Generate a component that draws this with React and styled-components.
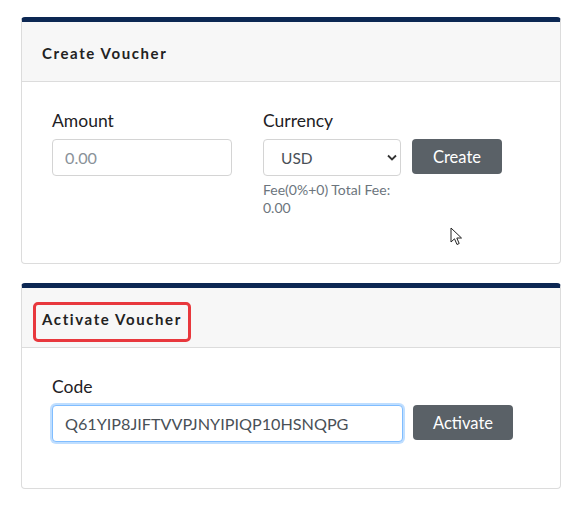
import React from "react";
import styled, { createGlobalStyle } from "styled-components";

const Global = createGlobalStyle`
  html, body { margin: 0; padding: 0; background: #fff; }
  body { font-family: Lato, "Open Sans", sans-serif; color: #212529; }
  * { box-sizing: border-box; }
`;

const Page = styled.div`
  position: relative;
  width: 588px;
  height: 508px;
  padding: 17px 27px 0 21px;
  display: flex;
  flex-direction: column;
  gap: 19px;
`;

const Card = styled.section`
  width: 540px;
  border: 1px solid #dcdcdc;
  border-top: 5px solid #0c2753;
  border-radius: 4px;
  background: #fff;
  height: ${(p) => p.$h}px;
  display: flex;
  flex-direction: column;
`;

const CardHeader = styled.div`
  height: 60px;
  background: #f7f7f7;
  border-bottom: 1px solid #dcdcdc;
  display: flex;
  align-items: center;
  padding: 2px 0 0 20px;
`;

const Title = styled.h2`
  position: relative;
  margin: 0;
  font-size: 15px;
  line-height: 18px;
  font-weight: 700;
  letter-spacing: 1.6px;
  color: #222;
  ${(p) =>
    p.$highlight &&
    `
    &::after {
      content: "";
      position: absolute;
      left: -9px;
      right: -9px;
      top: -8px;
      bottom: -14px;
      border: 3px solid #e8383d;
      border-radius: 5px;
    }
  `}
`;

const CardBody = styled.div`
  padding: 27px 30px 0 30px;
  display: flex;
  align-items: flex-start;
`;

const Field = styled.div`
  width: ${(p) => p.$w}px;
  margin-right: ${(p) => p.$mr || 0}px;
  display: flex;
  flex-direction: column;
`;

const Label = styled.label`
  font-size: 17.5px;
  line-height: 24px;
  margin-bottom: 6px;
  color: #1e2124;
`;

const Input = styled.input`
  width: 100%;
  height: 37px;
  padding: 0 12px;
  font-family: Lato, sans-serif;
  font-size: 16.2px;
  color: #495057;
  border: 1px solid ${(p) => (p.$focus ? "#80bdff" : "#d4d4d4")};
  border-radius: 4px;
  outline: none;
  box-shadow: ${(p) => (p.$focus ? "0 0 0 2px rgba(0,123,255,0.25)" : "none")};
  &::placeholder { color: #8a9299; }
`;

const SelectWrap = styled.div`
  position: relative;
  width: 100%;
  height: 37px;
`;

const Select = styled.select`
  width: 100%;
  height: 37px;
  appearance: none;
  -webkit-appearance: none;
  padding: 0 0 0 17px;
  font-family: Lato, sans-serif;
  font-size: 15.5px;
  color: #495057;
  background: #fff;
  border: 1px solid #d4d4d4;
  border-radius: 4px;
  outline: none;
`;

const Chevron = styled.svg`
  position: absolute;
  right: 4px;
  top: 15px;
  pointer-events: none;
`;

const Help = styled.div`
  margin-top: 5px;
  font-size: 14px;
  line-height: 18px;
  color: #6c757d;
`;

const Button = styled.button`
  margin-top: ${(p) => p.$mt}px;
  width: ${(p) => p.$w}px;
  height: 35px;
  background: #5a6167;
  color: #fff;
  border: none;
  border-radius: 4px;
  font-family: Lato, sans-serif;
  font-size: 16.5px;
  padding: 0;
`;

const Cursor = styled.svg`
  position: absolute;
  left: 450px;
  top: 227px;
`;

export default function App() {
  return (
    <>
      <Global />
      <Page>
        <Card $h={247}>
          <CardHeader>
            <Title>Create Voucher</Title>
          </CardHeader>
          <CardBody>
            <Field $w={180} $mr={31}>
              <Label>Amount</Label>
              <Input placeholder="0.00" />
            </Field>
            <Field $w={138} $mr={11}>
              <Label>Currency</Label>
              <SelectWrap>
                <Select defaultValue="USD">
                  <option>USD</option>
                </Select>
                <Chevron width="10" height="7" viewBox="0 0 10 7">
                  <path d="M1 1.5 L5 5.5 L9 1.5" fill="none" stroke="#333" strokeWidth="1.8" />
                </Chevron>
              </SelectWrap>
              <Help>Fee(0%+0) Total Fee: 0.00</Help>
            </Field>
            <Button $mt={30} $w={90}>Create</Button>
          </CardBody>
        </Card>
        <Card $h={206}>
          <CardHeader>
            <Title $highlight>Activate Voucher</Title>
          </CardHeader>
          <CardBody>
            <Field $w={351} $mr={10}>
              <Label>Code</Label>
              <Input $focus defaultValue="Q61YIP8JIFTVVPJNYIPIQP10HSNQPG" />
            </Field>
            <Button $mt={30} $w={100}>Activate</Button>
          </CardBody>
        </Card>
        <Cursor width="13" height="20" viewBox="0 0 13 20">
          <path d="M1 1 L1 15 L4.5 11.8 L7 17.5 L9.2 16.5 L6.8 11 L11.5 11 Z" fill="#fff" stroke="#222" strokeWidth="1" strokeLinejoin="round" />
        </Cursor>
      </Page>
    </>
  );
}
